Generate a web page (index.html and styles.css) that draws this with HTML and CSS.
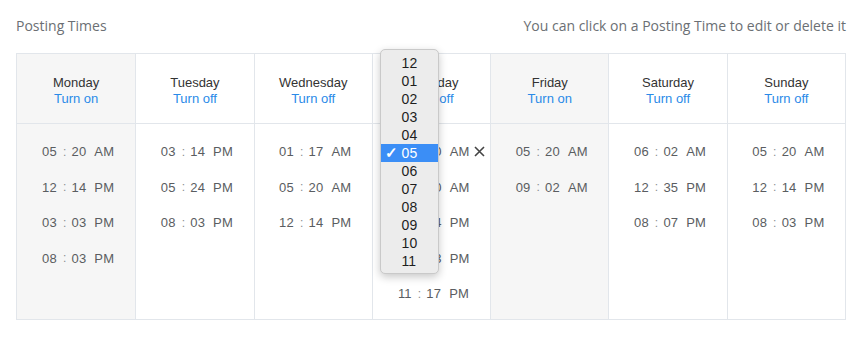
FILE: index.html
```html
<!DOCTYPE html>
<html>
<head>
  <title>Posting Times</title>
  <meta charset="UTF-8">
  <meta name="viewport" content="width=device-width, initial-scale=1.0">
  <link rel="stylesheet" href="styles.css">
</head>
<body>
  <div class="page">
    <div class="top">
      <span class="title">Posting Times</span>
      <span class="hint">You can click on a Posting Time to edit or delete it</span>
    </div>

    <div class="week">
      <div class="day off">
        <div class="day-head"><div class="name">Monday</div><a class="toggle">Turn on</a></div>
        <div class="slots">
          <div class="slot"><span class="time"><span>05</span><span class="sep">:</span><span>20</span><span class="ampm">AM</span></span></div>
          <div class="slot"><span class="time"><span>12</span><span class="sep">:</span><span>14</span><span class="ampm">PM</span></span></div>
          <div class="slot"><span class="time"><span>03</span><span class="sep">:</span><span>03</span><span class="ampm">PM</span></span></div>
          <div class="slot"><span class="time"><span>08</span><span class="sep">:</span><span>03</span><span class="ampm">PM</span></span></div>
        </div>
      </div>

      <div class="day">
        <div class="day-head"><div class="name">Tuesday</div><a class="toggle">Turn off</a></div>
        <div class="slots">
          <div class="slot"><span class="time"><span>03</span><span class="sep">:</span><span>14</span><span class="ampm">PM</span></span></div>
          <div class="slot"><span class="time"><span>05</span><span class="sep">:</span><span>24</span><span class="ampm">PM</span></span></div>
          <div class="slot"><span class="time"><span>08</span><span class="sep">:</span><span>03</span><span class="ampm">PM</span></span></div>
        </div>
      </div>

      <div class="day">
        <div class="day-head"><div class="name">Wednesday</div><a class="toggle">Turn off</a></div>
        <div class="slots">
          <div class="slot"><span class="time"><span>01</span><span class="sep">:</span><span>17</span><span class="ampm">AM</span></span></div>
          <div class="slot"><span class="time"><span>05</span><span class="sep">:</span><span>20</span><span class="ampm">AM</span></span></div>
          <div class="slot"><span class="time"><span>12</span><span class="sep">:</span><span>14</span><span class="ampm">PM</span></span></div>
        </div>
      </div>

      <div class="day">
        <div class="day-head"><div class="name">Thursday</div><a class="toggle">Turn off</a></div>
        <div class="slots">
          <div class="slot editing">
            <span class="time"><span>05</span><span class="sep">:</span><span>20</span><span class="ampm">AM</span>
              <svg class="remove" width="11" height="11" viewBox="0 0 11 11"><path d="M1 1L10 10M10 1L1 10" stroke="#444" stroke-width="1.6" fill="none"/></svg>
              <ul class="hour-menu">
                <li>12</li><li>01</li><li>02</li><li>03</li><li>04</li>
                <li class="selected"><span class="check">&#x2713;</span>05</li>
                <li>06</li><li>07</li><li>08</li><li>09</li><li>10</li><li>11</li>
              </ul>
            </span>
          </div>
          <div class="slot"><span class="time"><span>07</span><span class="sep">:</span><span>20</span><span class="ampm">AM</span></span></div>
          <div class="slot"><span class="time"><span>02</span><span class="sep">:</span><span>14</span><span class="ampm">PM</span></span></div>
          <div class="slot"><span class="time"><span>06</span><span class="sep">:</span><span>03</span><span class="ampm">PM</span></span></div>
          <div class="slot"><span class="time"><span>11</span><span class="sep">:</span><span>17</span><span class="ampm">PM</span></span></div>
        </div>
      </div>

      <div class="day off">
        <div class="day-head"><div class="name">Friday</div><a class="toggle">Turn on</a></div>
        <div class="slots">
          <div class="slot"><span class="time"><span>05</span><span class="sep">:</span><span>20</span><span class="ampm">AM</span></span></div>
          <div class="slot"><span class="time"><span>09</span><span class="sep">:</span><span>02</span><span class="ampm">AM</span></span></div>
        </div>
      </div>

      <div class="day">
        <div class="day-head"><div class="name">Saturday</div><a class="toggle">Turn off</a></div>
        <div class="slots">
          <div class="slot"><span class="time"><span>06</span><span class="sep">:</span><span>02</span><span class="ampm">AM</span></span></div>
          <div class="slot"><span class="time"><span>12</span><span class="sep">:</span><span>35</span><span class="ampm">PM</span></span></div>
          <div class="slot"><span class="time"><span>08</span><span class="sep">:</span><span>07</span><span class="ampm">PM</span></span></div>
        </div>
      </div>

      <div class="day">
        <div class="day-head"><div class="name">Sunday</div><a class="toggle">Turn off</a></div>
        <div class="slots">
          <div class="slot"><span class="time"><span>05</span><span class="sep">:</span><span>20</span><span class="ampm">AM</span></span></div>
          <div class="slot"><span class="time"><span>12</span><span class="sep">:</span><span>14</span><span class="ampm">PM</span></span></div>
          <div class="slot"><span class="time"><span>08</span><span class="sep">:</span><span>03</span><span class="ampm">PM</span></span></div>
        </div>
      </div>
    </div>
  </div>
</body>
</html>
```

FILE: styles.css
```css
body { margin: 0; background: #fff; font-family: "Liberation Sans", Arial, sans-serif; }
.page { padding: 15px 15px 0 16px; }
.top { display: flex; justify-content: space-between; align-items: center; height: 20px; margin-bottom: 18px; font-family: "Open Sans", sans-serif; font-size: 14px; color: #6b6f74; }

.week { display: grid; grid-template-columns: repeat(7, 1fr); border: 1px solid #e2e6eb; height: 265px; }
.day { display: flex; flex-direction: column; border-left: 1px solid #e2e6eb; }
.day:first-child { border-left: none; }
.day.off { background: #f6f6f6; }

.day-head { height: 70px; border-bottom: 1px solid #e2e6eb; display: flex; flex-direction: column; align-items: center; justify-content: center; font-size: 13px; line-height: 16px; padding-top: 4px; box-sizing: border-box; }
.name { color: #333; }
.toggle { color: #2a8ae8; cursor: pointer; }

.slots { padding-top: 10px; }
.slot { display: flex; justify-content: center; height: 35.5px; padding-left: 4px; }
.slot.editing { position: relative; z-index: 2; }
.time { position: relative; display: inline-flex; align-items: center; font-size: 13px; color: #5a5d61; letter-spacing: 0.2px; }
.sep { margin: 0 5px 0 6px; font-size: 12px; color: #8a8d91; }
.ampm { margin-left: 8px; }

.remove { position: absolute; left: calc(100% + 4px); top: 12px; }

.hour-menu { position: absolute; left: -17px; top: -85px; width: 59px; margin: 0; padding: 4px 0; list-style: none; background: #ececec; border: 1px solid #c9c9c9; border-radius: 5px; box-shadow: 0 3px 9px rgba(0, 0, 0, 0.22); box-sizing: border-box; height: 225px; }
.hour-menu li { position: relative; height: 18px; line-height: 18px; padding-left: 20px; font-size: 14px; color: #1e1e1e; }
.hour-menu li.selected { background: #3b8ef6; color: #fff; }
.check { position: absolute; left: 4px; font-size: 15px; font-weight: bold; }
```
